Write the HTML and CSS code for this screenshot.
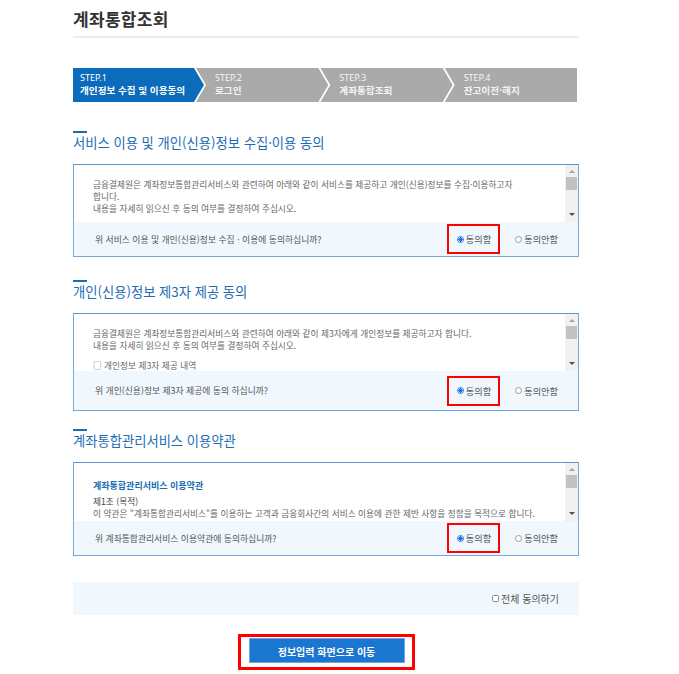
FILE: index.html
```html
<!DOCTYPE html>
<html lang="ko">
<head>
<meta charset="utf-8">
<title>계좌통합조회</title>
<link rel="stylesheet" href="styles.css">
</head>
<body>
<div class="page">
  <h1 class="title">계좌통합조회</h1>

  <div class="steps">
    <div class="step step-first active"><span class="step-no">STEP.1</span><span class="step-name">개인정보 수집 및 이용동의</span></div>
    <div class="step"><span class="step-no">STEP.2</span><span class="step-name">로그인</span></div>
    <div class="step"><span class="step-no">STEP.3</span><span class="step-name">계좌통합조회</span></div>
    <div class="step step-last"><span class="step-no">STEP.4</span><span class="step-name">잔고이전·해지</span></div>
  </div>

  <section class="sec sec1">
    <h2 class="sec-title">서비스 이용 및 개인(신용)정보 수집·이용 동의</h2>
    <div class="box">
      <div class="box-body">
        <div class="box-text">
          <p class="t1">금융결제원은 계좌정보통합관리서비스와 관련하여 아래와 같이 서비스를 제공하고 개인(신용)정보를 수집·이용하고자<br>합니다.<br>내용을 자세히 읽으신 후 동의 여부를 결정하여 주십시오.</p>
        </div>
        <div class="sbar"><span class="sb-up"></span><span class="sb-thumb"></span><span class="sb-track"></span><span class="sb-down"></span></div>
      </div>
      <div class="box-q">
        <span class="q">위 서비스 이용 및 개인(신용)정보 수집 · 이용에 동의하십니까?</span>
        <span class="opts">
          <span class="mark"><span class="radio on"></span>동의함</span>
          <span class="opt"><span class="radio"></span>동의안함</span>
        </span>
      </div>
    </div>
  </section>

  <section class="sec sec2">
    <h2 class="sec-title">개인(신용)정보 제3자 제공 동의</h2>
    <div class="box">
      <div class="box-body">
        <div class="box-text">
          <p class="t1">금융결제원은 계좌정보통합관리서비스와 관련하여 아래와 같이 제3자에게 개인정보를 제공하고자 합니다.<br>내용을 자세히 읽으신 후 동의 여부를 결정하여 주십시오.</p>
          <p class="t2">□ 개인정보 제3자 제공 내역</p>
        </div>
        <div class="sbar"><span class="sb-up"></span><span class="sb-thumb"></span><span class="sb-track"></span><span class="sb-down"></span></div>
      </div>
      <div class="box-q tall">
        <span class="q">위 개인(신용)정보 제3자 제공에 동의 하십니까?</span>
        <span class="opts">
          <span class="mark"><span class="radio on"></span>동의함</span>
          <span class="opt"><span class="radio"></span>동의안함</span>
        </span>
      </div>
    </div>
  </section>

  <section class="sec sec3">
    <h2 class="sec-title">계좌통합관리서비스 이용약관</h2>
    <div class="box">
      <div class="box-body b3">
        <div class="box-text">
          <p class="terms-title">계좌통합관리서비스 이용약관</p>
          <p class="art">제1조 (목적)</p>
          <p class="t3">이 약관은 "계좌통합관리서비스"를 이용하는 고객과 금융회사간의 서비스 이용에 관한 제반 사항을 정함을 목적으로 합니다.</p>
        </div>
        <div class="sbar"><span class="sb-up"></span><span class="sb-thumb"></span><span class="sb-track"></span><span class="sb-down"></span></div>
      </div>
      <div class="box-q">
        <span class="q">위 계좌통합관리서비스 이용약관에 동의하십니까?</span>
        <span class="opts">
          <span class="mark"><span class="radio on"></span>동의함</span>
          <span class="opt"><span class="radio"></span>동의안함</span>
        </span>
      </div>
    </div>
  </section>

  <div class="all-agree">
    <span class="chk-label"><span class="chk"></span>전체 동의하기</span>
  </div>

  <div class="btn-row">
    <span class="btn-mark"><span class="btn">정보입력 화면으로 이동</span></span>
  </div>
</div>
</body>
</html>
```

FILE: styles.css
```css
* { box-sizing: border-box; }
html, body { margin: 0; padding: 0; background: #fff; }
body {
  font-family: "Noto Sans CJK KR", "Noto Sans", "Liberation Sans", sans-serif;
  color: #333;
}
.page {
  width: 506px;
  margin-left: 73px;
}
.title {
  margin: 0;
  padding-top: 6px;
  font-size: 17px;
  line-height: 25px;
  font-weight: bold;
  color: #333;
  height: 38px;
  border-bottom: 2px solid #ececec;
  letter-spacing: 0.3px;
}

/* steps */
.steps {
  display: flex;
  margin-top: 30px;
  height: 34px;
  width: 504px;
}
.step {
  flex: 1 1 0;
  background: #aaaaaa;
  margin-left: -8px;
  padding-left: 19px;
  padding-top: 4px;
  display: flex;
  flex-direction: column;
  color: #f4f4f4;
  clip-path: polygon(0 0, calc(100% - 10px) 0, 100% 50%, calc(100% - 10px) 100%, 0 100%, 10px 50%);
}
.step-first {
  flex: 0 0 131px;
  margin-left: 0;
  padding-left: 7px;
  clip-path: polygon(0 0, calc(100% - 10px) 0, 100% 50%, calc(100% - 10px) 100%, 0 100%);
}
.step-last {
  clip-path: polygon(0 0, 100% 0, 100% 100%, 0 100%, 10px 50%);
}
.step.active { background: #0a6cba; color: #fff; }
.step-no {
  display: block;
  font-family: "Noto Sans", "Liberation Sans", sans-serif;
  font-size: 9px;
  line-height: 12px;
  height: 12px;
}
.step-name {
  display: block;
  font-weight: bold;
  font-size: 9.6px;
  line-height: 13px;
  height: 13px;
  white-space: nowrap;
}

/* sections */
.sec { display: block; }
.sec1 { margin-top: 26px; }
.sec2 { margin-top: 20px; }
.sec3 { margin-top: 15px; }
.sec-title {
  margin: 0;
  padding-top: 3px;
  font-size: 13.3px;
  line-height: 18px;
  font-weight: normal;
  color: #1b6db3;
}
.sec-title::before {
  content: "";
  display: block;
  width: 14px;
  height: 2px;
  background: #1b6db3;
  margin-bottom: 1px;
}
.box {
  margin-top: 12px;
  border: 1px solid #74a9db;
  border-top-color: #5a95d0;
}
.box-body {
  display: flex;
  height: 57px;
  background: #fff;
}
.box-body.b3 { height: 58px; }
.box-text {
  flex: 1;
  overflow: hidden;
  padding: 14px 0 0 19px;
  font-size: 8.7px;
  line-height: 12px;
  color: #666;
}
.box-text p { margin: 0; }
.t2 { margin-top: 8px !important; }
.terms-title {
  padding-top: 3px;
  font-weight: bold;
  color: #1b6db3;
  font-size: 9px;
  margin-bottom: 4px !important;
}
.art { color: #444; }
.t3 { white-space: nowrap; }
.sbar {
  width: 13px;
  background: #f1f1f1;
  display: flex;
  flex-direction: column;
  align-items: center;
}
.sb-up {
  margin-top: 5px;
  width: 0; height: 0;
  border-left: 3px solid transparent;
  border-right: 3px solid transparent;
  border-bottom: 3px solid #a3a3a3;
}
.sb-thumb {
  margin-top: 4px;
  width: 11px;
  height: 13px;
  background: #c1c1c1;
}
.sb-track { flex: 1; }
.sb-down {
  margin-bottom: 6px;
  width: 0; height: 0;
  border-left: 3px solid transparent;
  border-right: 3px solid transparent;
  border-top: 3px solid #505050;
}
.box-q {
  height: 34px;
  background: #f1f8fd;
  display: flex;
  align-items: center;
  justify-content: space-between;
  padding: 0 20px 0 21px;
  font-size: 8.8px;
  color: #555;
}
.box-q.tall { height: 39px; }
.opts { display: flex; align-items: center; font-size: 9.2px; }
.mark {
  display: inline-flex;
  align-items: center;
  border: 2px solid #f00;
  height: 30px;
  padding: 0 7px 0 8px;
  margin-right: 15px;
}
.opt { display: inline-flex; align-items: center; }
.radio {
  display: inline-block;
  width: 7px;
  height: 7px;
  border-radius: 50%;
  border: 1px solid #9a9a9a;
  background: #fff;
  margin-right: 2px;
}
.radio.on {
  border-color: #3a7bd5;
  background: radial-gradient(circle, #1a73e8 0 2px, #fff 2.2px);
}

.all-agree {
  margin-top: 26px;
  height: 33px;
  background: #f1f8fd;
  display: flex;
  align-items: center;
  justify-content: flex-end;
  padding-right: 20px;
  font-size: 10px;
  color: #555;
}
.chk-label { display: inline-flex; align-items: center; }
.chk {
  display: inline-block;
  width: 7px;
  height: 7px;
  border: 1px solid #8a8a8a;
  border-radius: 1.5px;
  background: #fff;
  margin-right: 2px;
}
.btn-row {
  margin-top: 19px;
  display: flex;
  justify-content: center;
}
.btn-mark {
  display: inline-block;
  border: 3px solid #f00;
  padding: 1px 7px 4px 8px;
}
.btn {
  display: block;
  width: 156px;
  height: 25px;
  line-height: 25px;
  text-align: center;
  background: #1a76cf;
  border: 1px solid #6ea6df;
  color: #fff;
  font-size: 10px;
  font-weight: bold;
}
```
